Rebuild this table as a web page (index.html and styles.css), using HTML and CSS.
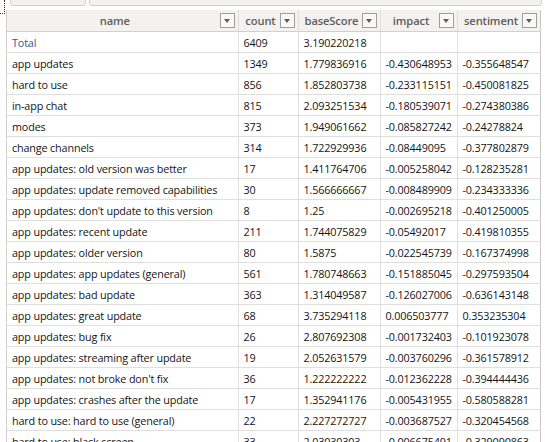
FILE: index.html
```html
<!DOCTYPE html>
<html>
<head>
<meta charset="utf-8">
<link rel="stylesheet" href="styles.css">
</head>
<body>
<div class="page">
  <div class="topbar">
    <div class="corner"></div>
    <div class="slot slot-a"></div>
    <div class="slot slot-b"></div>
  </div>
  <div class="frame">
    <table class="grid">
      <colgroup>
        <col class="c-name"><col class="c-count"><col class="c-base"><col class="c-impact"><col class="c-sent">
      </colgroup>
      <thead>
        <tr>
          <th><span class="hd">name</span><span class="dd"></span></th>
          <th><span class="hd">count</span><span class="dd"></span></th>
          <th><span class="hd">baseScore</span><span class="dd"></span></th>
          <th><span class="hd">impact</span><span class="dd"></span></th>
          <th><span class="hd">sentiment</span><span class="dd"></span></th>
        </tr>
      </thead>
      <tbody>
        <tr><td class="total">Total</td><td>6409</td><td>3.190220218</td><td></td><td></td></tr>
        <tr><td>app updates</td><td>1349</td><td>1.779836916</td><td>-0.430648953</td><td>-0.355648547</td></tr>
        <tr><td>hard to use</td><td>856</td><td>1.852803738</td><td>-0.233115151</td><td>-0.450081825</td></tr>
        <tr><td>in-app chat</td><td>815</td><td>2.093251534</td><td>-0.180539071</td><td>-0.274380386</td></tr>
        <tr><td>modes</td><td>373</td><td>1.949061662</td><td>-0.085827242</td><td>-0.24278824</td></tr>
        <tr><td>change channels</td><td>314</td><td>1.722929936</td><td>-0.08449095</td><td>-0.377802879</td></tr>
        <tr><td>app updates: old version was better</td><td>17</td><td>1.411764706</td><td>-0.005258042</td><td>-0.128235281</td></tr>
        <tr><td>app updates: update removed capabilities</td><td>30</td><td>1.566666667</td><td>-0.008489909</td><td>-0.234333336</td></tr>
        <tr><td>app updates: don't update to this version</td><td>8</td><td>1.25</td><td>-0.002695218</td><td>-0.401250005</td></tr>
        <tr><td>app updates: recent update</td><td>211</td><td>1.744075829</td><td>-0.05492017</td><td>-0.419810355</td></tr>
        <tr><td>app updates: older version</td><td>80</td><td>1.5875</td><td>-0.022545739</td><td>-0.167374998</td></tr>
        <tr><td>app updates: app updates (general)</td><td>561</td><td>1.780748663</td><td>-0.151885045</td><td>-0.297593504</td></tr>
        <tr><td>app updates: bad update</td><td>363</td><td>1.314049587</td><td>-0.126027006</td><td>-0.636143148</td></tr>
        <tr><td>app updates: great update</td><td>68</td><td>3.735294118</td><td>0.006503777</td><td>0.353235304</td></tr>
        <tr><td>app updates: bug fix</td><td>26</td><td>2.807692308</td><td>-0.001732403</td><td>-0.101923078</td></tr>
        <tr><td>app updates: streaming after update</td><td>19</td><td>2.052631579</td><td>-0.003760296</td><td>-0.361578912</td></tr>
        <tr><td>app updates: not broke don't fix</td><td>36</td><td>1.222222222</td><td>-0.012362228</td><td>-0.394444436</td></tr>
        <tr><td>app updates: crashes after the update</td><td>17</td><td>1.352941176</td><td>-0.005431955</td><td>-0.580588281</td></tr>
        <tr><td>hard to use: hard to use (general)</td><td>22</td><td>2.227272727</td><td>-0.003687527</td><td>-0.320454568</td></tr>
        <tr><td>hard to use: black screen</td><td>33</td><td>2.03030303</td><td>-0.006675491</td><td>-0.329090863</td></tr>
      </tbody>
    </table>
  </div>
</div>
</body>
</html>
```
FILE: styles.css
```css
html, body {
  margin: 0;
  padding: 0;
  background: #ffffff;
  overflow: hidden;
}
.page {
  width: 545px;
  height: 442px;
  overflow: hidden;
  position: relative;
  font-family: "Open Sans", "Noto Sans", sans-serif;
  font-size: 10.8px;
  letter-spacing: -0.15px;
  color: #141414;
}
.topbar {
  height: 10px;
  position: relative;
}
.corner {
  position: absolute;
  left: 0;
  top: 0;
  width: 4px;
  height: 13px;
  border-right: 1px dotted #333;
  border-bottom: 1px dotted #333;
  z-index: 2;
}
.slot {
  position: absolute;
  top: -10px;
  height: 14px;
  border: 1px solid #d2d0ce;
  border-radius: 3px;
  background: #f3f2f1;
}
.slot-a { left: 10px; width: 74px; }
.slot-b { left: 89px; width: 451px; }
.frame {
  margin-left: 6px;
  border-left: 1px solid #d2d0ce;
  width: 533px;
  background: #f3f2f1;
}
.grid {
  border-collapse: collapse;
  table-layout: fixed;
  width: 533px;
  background: #ffffff;
}
.c-name { width: 231px; }
.c-count { width: 60px; }
.c-base { width: 82px; }
.c-impact { width: 77px; }
.c-sent { width: 83px; }
.grid th {
  position: relative;
  height: 21px;
  padding: 0 19px 0 0;
  background: #f3f2f1;
  border-right: 1px solid #e1dfdd;
  border-bottom: 1px solid #d2d0ce;
  font-size: 11.2px;
  font-weight: 600;
  color: #5f5d5b;
  text-align: center;
  white-space: nowrap;
  overflow: hidden;
}
.grid th:last-child { border-right: 1px solid #c8c6c4; }
.hd { display: inline-block; padding-left: 4px; }
.dd {
  position: absolute;
  right: 3px;
  top: 3px;
  width: 13px;
  height: 13px;
  border: 1px solid #a19f9d;
  background: #faf9f8;
}
.dd::after {
  content: "";
  position: absolute;
  left: 3px;
  top: 5px;
  border-left: 3.5px solid transparent;
  border-right: 3.5px solid transparent;
  border-top: 4px solid #605e5c;
}
.grid td {
  height: 20px;
  padding: 0 0 0 5px;
  border-right: 1px solid #e1dfdd;
  border-bottom: 1px solid #e1dfdd;
  white-space: nowrap;
  overflow: hidden;
  text-align: left;
}
.grid td:last-child { border-right: 1px solid #c8c6c4; }
.grid td.total { color: #2a5d95; }
```
